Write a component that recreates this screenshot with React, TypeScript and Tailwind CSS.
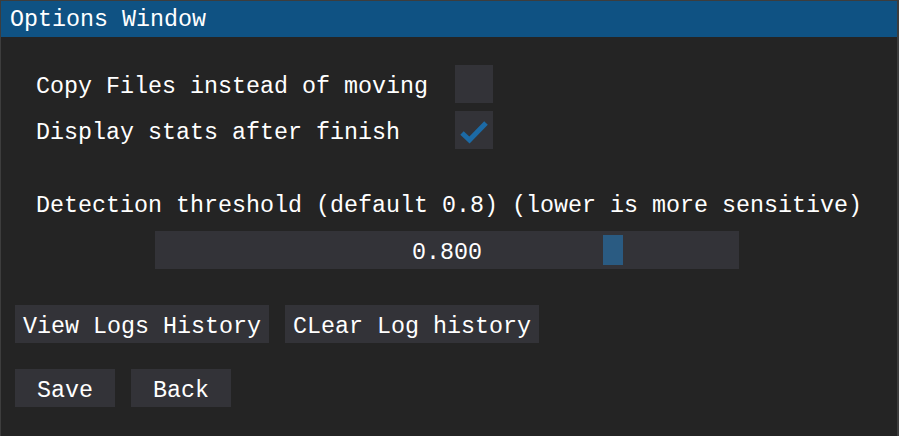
import { useState } from "react";

const font = "font-['Liberation_Mono','DejaVu_Sans_Mono',monospace] text-[23.33px]";

function Checkbox({ checked }: { checked: boolean }) {
  return (
    <div className="w-[38px] h-[38px] bg-[#333338] flex items-center justify-center">
      {checked && (
        <svg width="38" height="38" viewBox="0 0 38 38">
          <polyline
            points="7,22 14.5,29 31,12"
            fill="none"
            stroke="#1c6aa5"
            strokeWidth="5"
          />
        </svg>
      )}
    </div>
  );
}

function Button({ label, className = "" }: { label: string; className?: string }) {
  return (
    <button className={`h-[38px] bg-[#333338] text-white leading-[26px] pt-[5px] flex items-center justify-center ${className}`}>
      {label}
    </button>
  );
}

export default function App() {
  const [copy] = useState(false);
  const [stats] = useState(true);

  return (
    <div className={`w-[899px] h-[436px] bg-[#3d3d3d] pt-px pl-px pr-[2px] overflow-hidden ${font}`}>
      <div className="h-full bg-[#242424] text-white flex flex-col">
        <div className="h-[36px] bg-[#0f5283] pl-[9px] pt-[2px] leading-[34px]">Options Window</div>

        <div className="flex flex-col pl-[14px] pt-[28px]">
          <div className="flex items-center h-[38px] pl-[21px]">
            <span className="w-[419px] pt-[5px] leading-[26px]">Copy Files instead of moving</span>
            <Checkbox checked={copy} />
          </div>
          <div className="flex items-center h-[38px] pl-[21px] mt-[8px]">
            <span className="w-[419px] pt-[5px] leading-[26px]">Display stats after finish</span>
            <Checkbox checked={stats} />
          </div>

          <div className="pl-[21px] mt-[43px] h-[26px] leading-[26px]">
            <span className="block pt-[3px] leading-[23px]">
              Detection threshold (default 0.8) (lower is more sensitive)
            </span>
          </div>

          <div className="ml-[140px] mt-[13px] w-[584px] h-[38px] bg-[#333338] relative flex items-center justify-center">
            <span className="pt-[5px] leading-[26px]">0.800</span>
            <div className="absolute left-[448px] top-[4px] w-[20px] h-[30px] bg-[#2a5b82]" />
          </div>

          <div className="flex gap-[16px] mt-[36px]">
            <Button label="View Logs History" className="w-[254px]" />
            <Button label="CLear Log history" className="w-[254px]" />
          </div>

          <div className="flex gap-[16px] mt-[26px]">
            <Button label="Save" className="w-[100px]" />
            <Button label="Back" className="w-[100px]" />
          </div>
        </div>
      </div>
    </div>
  );
}
